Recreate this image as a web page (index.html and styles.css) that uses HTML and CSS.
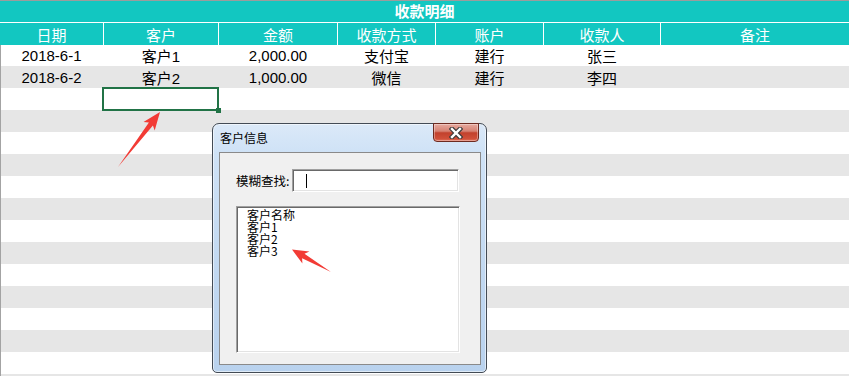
FILE: index.html
```html
<!DOCTYPE html>
<html lang="zh-CN">
<head>
    <meta charset="UTF-8">
    <meta name="viewport" content="width=device-width, initial-scale=1.0">
    <title>收款明细</title>
    <link rel="stylesheet" href="styles.css">
</head>
<body>

<div class="sheet">
    <div class="title">收款明细</div>

    <div class="row head">
        <div class="cell">日期</div>
        <div class="cell">客户</div>
        <div class="cell">金额</div>
        <div class="cell">收款方式</div>
        <div class="cell">账户</div>
        <div class="cell">收款人</div>
        <div class="cell">备注</div>
    </div>

    <div class="row data first">
        <div class="cell">2018-6-1</div>
        <div class="cell">客户1</div>
        <div class="cell">2,000.00</div>
        <div class="cell">支付宝</div>
        <div class="cell">建行</div>
        <div class="cell">张三</div>
        <div class="cell"></div>
    </div>
    <div class="row data alt">
        <div class="cell">2018-6-2</div>
        <div class="cell">客户2</div>
        <div class="cell">1,000.00</div>
        <div class="cell">微信</div>
        <div class="cell">建行</div>
        <div class="cell">李四</div>
        <div class="cell"></div>
    </div>
    <div class="row data">
        <div class="cell"></div>
        <div class="cell selected"></div>
    </div>

    <!-- filas vacías de la hoja -->
    <div class="row data alt"></div>
    <div class="row data"></div>
    <div class="row data alt"></div>
    <div class="row data"></div>
    <div class="row data alt"></div>
    <div class="row data"></div>
    <div class="row data alt"></div>
    <div class="row data"></div>
    <div class="row data alt"></div>
    <div class="row data"></div>
    <div class="row data alt"></div>
    <div class="row data"></div>
    <div class="row data alt"></div>
</div>

<div class="dialog">
    <div class="dialog-bar">
        <span class="dialog-title">客户信息</span>
        <button type="button" class="dialog-close">
            <svg width="14" height="12" viewBox="0 0 14 12">
                <path d="M3 2 L11 10 M11 2 L3 10" stroke="#3b3b3b" stroke-width="4.6" stroke-linecap="square"/>
                <path d="M3 2 L11 10 M11 2 L3 10" stroke="#ffffff" stroke-width="2.4" stroke-linecap="square"/>
            </svg>
        </button>
    </div>
    <div class="dialog-body">
        <div class="search">
            <label class="search-label">模糊查找:</label>
            <div class="textbox"><span class="caret"></span></div>
        </div>
        <ul class="listbox">
            <li>客户名称</li>
            <li>客户1</li>
            <li>客户2</li>
            <li>客户3</li>
        </ul>
    </div>
</div>

<svg class="arrows" width="851" height="376" viewBox="0 0 851 376">
    <polygon points="118,167 148.9,122.4 143.5,122.1 160,112 154.7,130.5 152.9,125.4"/>
    <polygon points="331,272 304.5,253.8 309.4,251.4 292,249.5 302.4,263.6 302.1,258.2"/>
</svg>

</body>
</html>
```

FILE: styles.css
```css
body {
    margin: 0;
    width: 851px;
    height: 376px;
    overflow: hidden;
    background-color: #fff;
    font-family: "Liberation Sans", "Noto Sans CJK SC", sans-serif;
}

.sheet {
    width: 849px;
    height: 376px;
    box-sizing: border-box;
    overflow: hidden;
    border-top: 1px solid #9c9c9c;
    background-color: #fff;
}

.title {
    height: 21px;
    line-height: 21px;
    background-color: #12c7c1;
    color: #fff;
    font-size: 15px;
    font-weight: bold;
    text-align: center;
}

.row {
    display: grid;
    grid-template-columns: 103px 114px 118px 97px 107px 116px 188px;
    column-gap: 1px;
    height: 22px;
    font-size: 15px;
}

.row .cell {
    display: flex;
    align-items: center;
    justify-content: center;
    white-space: nowrap;
}

.head {
    margin-top: 1px;
    background-color: #fff;
}

.head .cell {
    background-color: #12c7c1;
    color: #fff;
}

.data {
    color: #000;
    box-shadow: inset 1px 0 0 #a3a3a3;
}

.data.first {
    height: 21px;
}

.data.alt {
    background-color: #e6e6e6;
}

.cell.selected {
    position: relative;
}

.cell.selected::before {
    content: "";
    position: absolute;
    top: -1px;
    bottom: -1px;
    left: -2px;
    right: -1px;
    border: 2px solid #217346;
}

.cell.selected::after {
    content: "";
    position: absolute;
    right: -3px;
    bottom: -3px;
    width: 5px;
    height: 5px;
    background-color: #217346;
}

/* ventana de diálogo */
.dialog {
    position: absolute;
    left: 212px;
    top: 123px;
    width: 275px;
    height: 250px;
    box-sizing: border-box;
    display: flex;
    flex-direction: column;
    border: 1px solid #434b55;
    border-radius: 7px 7px 5px 5px;
    background: linear-gradient(to bottom, #dbe9f8 0, #cfe2f6 28px, #c1d8f1 60%, #b9d2ee 100%);
    box-shadow: inset 0 0 0 1px rgba(255, 255, 255, 0.55);
    font-family: "Noto Sans CJK SC", "Liberation Sans", sans-serif;
    font-size: 12px;
    color: #000;
}

.dialog-bar {
    display: flex;
    justify-content: space-between;
    align-items: center;
    height: 28px;
    flex-shrink: 0;
}

.dialog-title {
    padding-left: 7px;
    line-height: 14px;
}

.dialog-close {
    align-self: flex-start;
    display: flex;
    align-items: center;
    justify-content: center;
    width: 46px;
    height: 19px;
    margin: -1px 7px 0 0;
    padding: 0;
    border: 1px solid #6d2a20;
    border-radius: 0 0 4px 4px;
    background: linear-gradient(to bottom, #e6aa9f 0%, #d68273 42%, #c2412d 52%, #cf4f39 85%, #e0705a 100%);
    box-shadow: inset 0 0 0 1px rgba(255, 255, 255, 0.35);
}

.dialog-body {
    width: 262px;
    height: 213px;
    margin-left: 6px;
    box-sizing: border-box;
    padding: 16px 0 0 16px;
    border: 1px solid #8a8a8a;
    background-color: #f0f0f0;
}

.search {
    display: flex;
    align-items: center;
}

.search-label {
    width: 56px;
    font-size: 12.5px;
    line-height: 14px;
}

.textbox,
.listbox {
    box-sizing: border-box;
    border: 1px solid;
    border-color: #a0a0a0 #ffffff #ffffff #a0a0a0;
    box-shadow: inset 1px 1px 0 #696969, inset -1px -1px 0 #e3e3e3;
    background-color: #fff;
}

.textbox {
    display: flex;
    align-items: center;
    width: 167px;
    height: 23px;
}

.caret {
    width: 1px;
    height: 14px;
    margin-left: 13px;
    background-color: #000;
}

.listbox {
    list-style-type: none;
    width: 224px;
    height: 147px;
    margin: 14px 0 0 0;
    padding: 2px 0 0 10px;
}

.listbox li {
    font-size: 12px;
    line-height: 12px;
    height: 12px;
    white-space: nowrap;
}

.arrows {
    position: absolute;
    left: 0;
    top: 0;
    pointer-events: none;
}

.arrows polygon {
    fill: #f23b35;
}
```
